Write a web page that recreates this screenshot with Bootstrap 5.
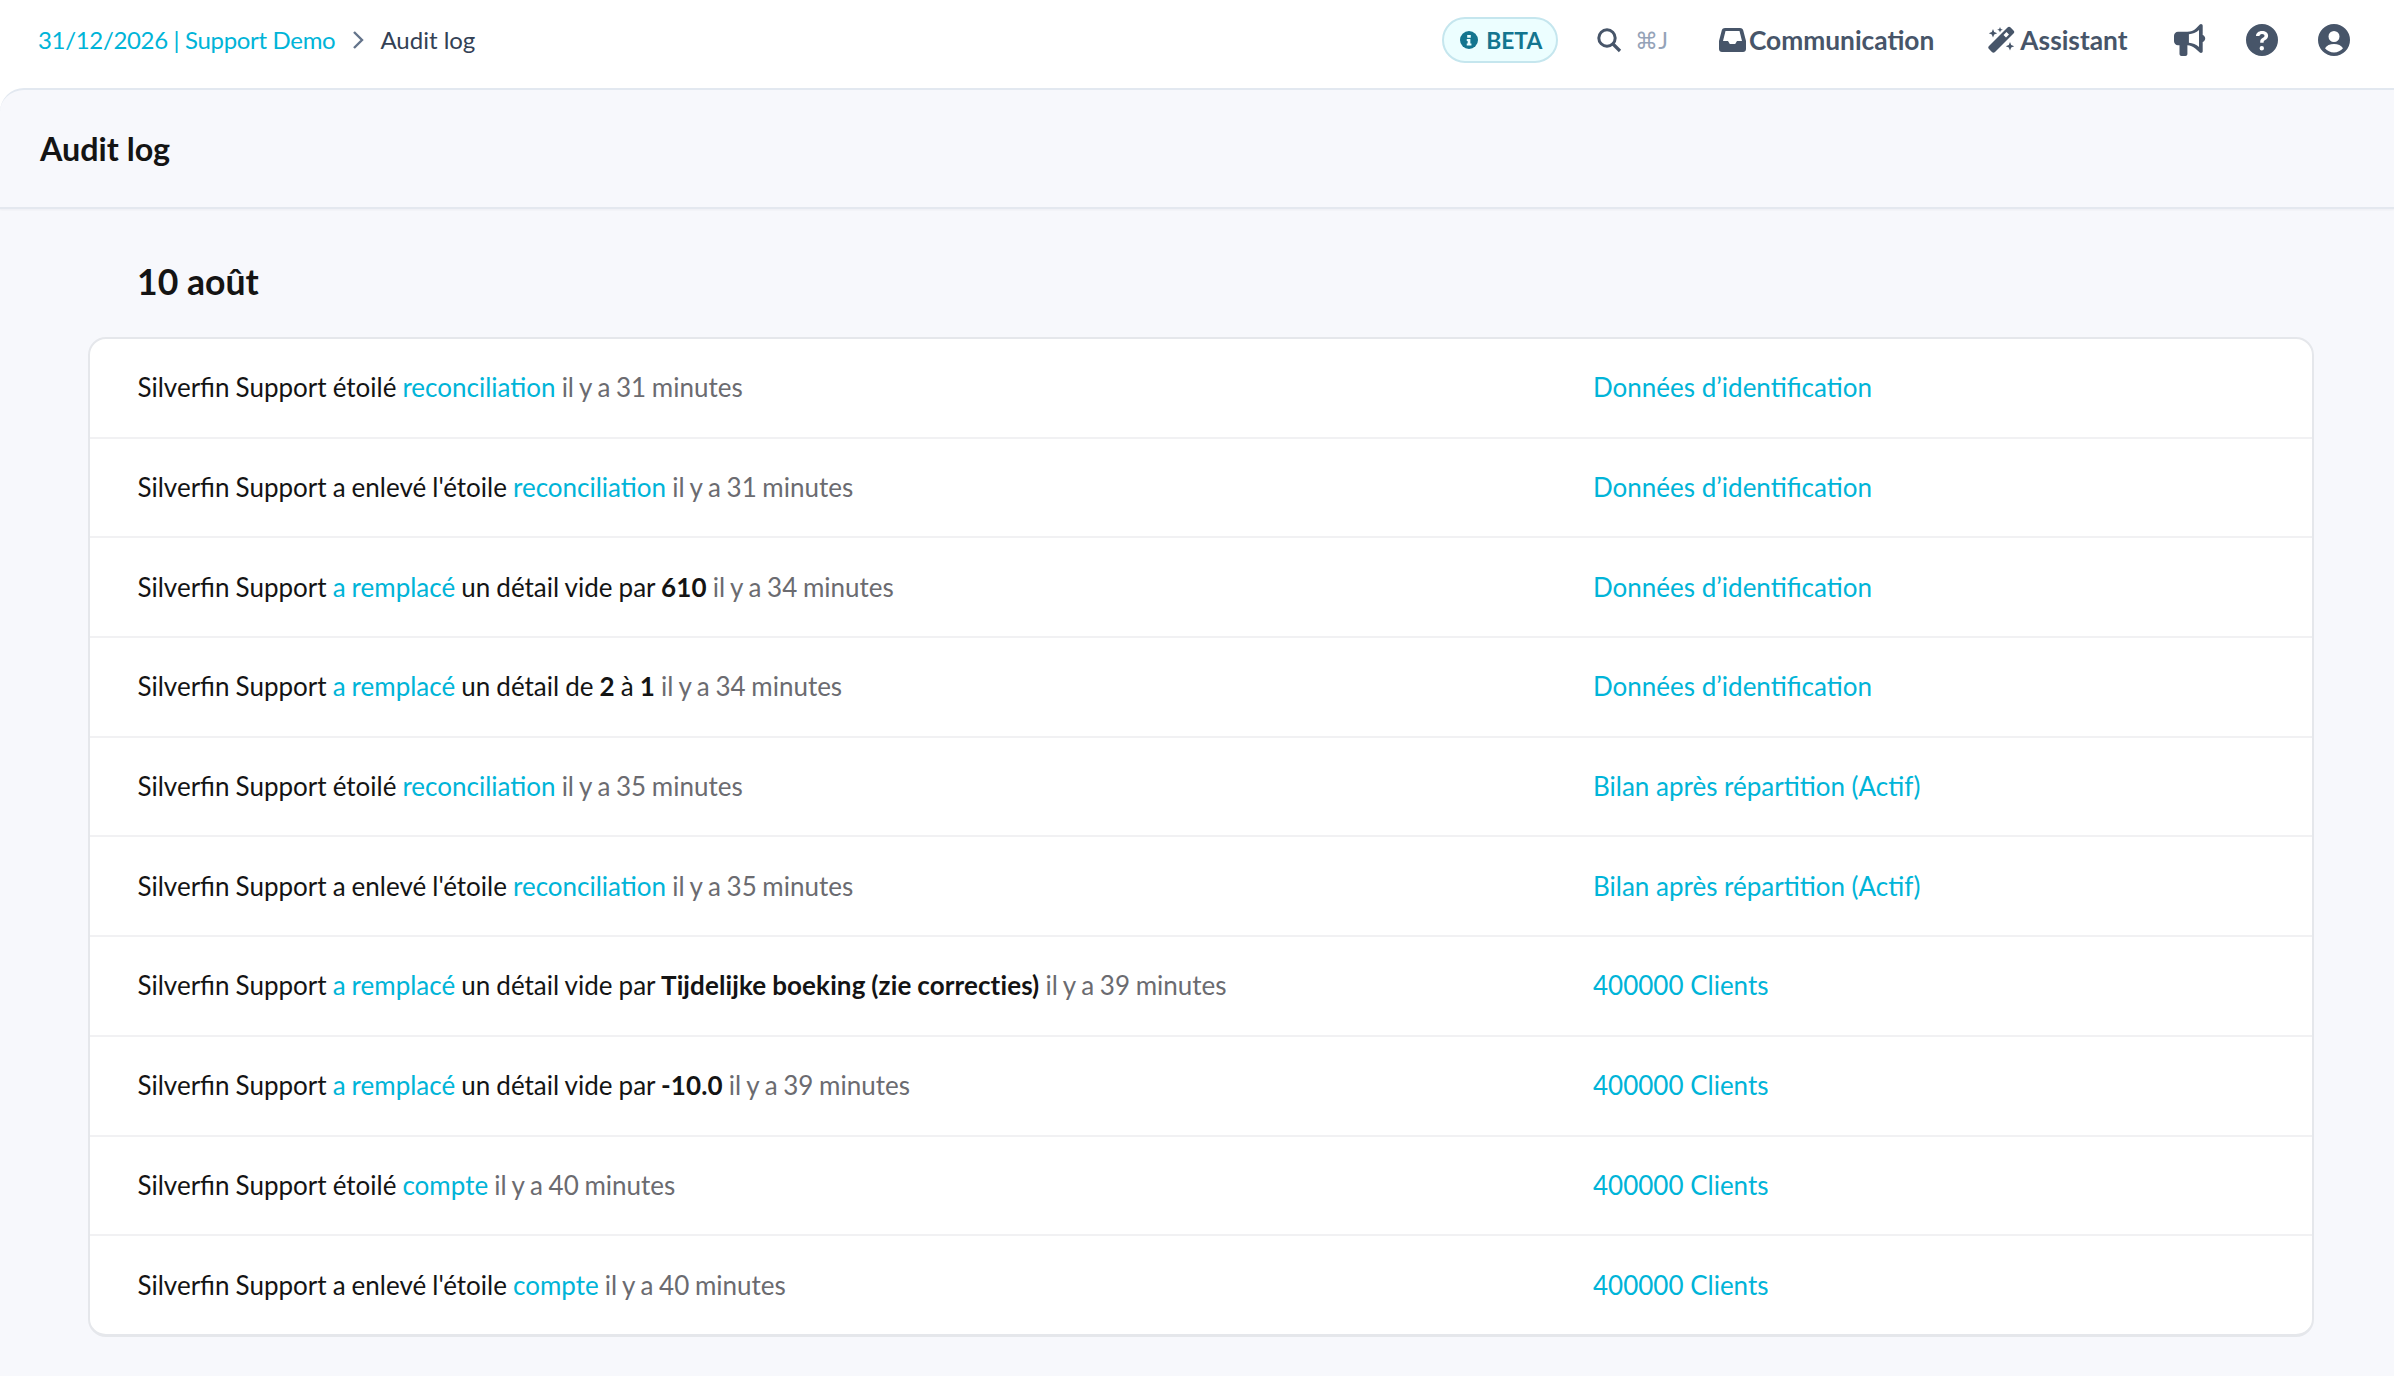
<!DOCTYPE html>
<html lang="fr">
<head>
  <meta charset="UTF-8">
  <title>Audit log</title>
  <link href="https://cdn.jsdelivr.net/npm/bootstrap@5.3.0/dist/css/bootstrap.min.css" rel="stylesheet">
  <style>
    html, body { height: 100%; }
    body { font-family: Lato, "Liberation Sans", sans-serif; background: #fff; color: #141414; font-size: 26px; overflow: hidden; }
    a { text-decoration: none; color: #00b4d8; }
    .top-strip { height: 88px; padding: 0 44px 8px 38px; }
    .crumb-text { font-size: 24px; color: #334155; }
    .crumb-link { font-size: 24px; letter-spacing: -.33px; color: #00b4d8; }
    .crumb-sep { width: 14px; height: 20px; margin: 0 15px 0 16px; }
    .beta-pill { height: 46px; padding: 0 14px 0 16px; border: 2px solid #c5e6ee; border-radius: 23px; background: #ecfeff; color: #14758f; font-weight: 700; font-size: 22.800px; gap: 8px; margin-right: 38px; }
    .search-box { color: #94a3b8; font-size: 23px; gap: 13px; margin-right: 51px; }
    .top-action { font-weight: 700; color: #475569; font-size: 26.300px; gap: 3px; }
    .top-action span { padding-top: 2px; }
    .act-comm { margin-right: 53px; }
    .act-assist { gap: 5px; margin-right: 46.500px; }
    .round-icon { width: 32px; height: 32px; margin-left: 40px; fill: #475569; display: block; }
    .main-panel { height: calc(100% - 88px); background: #f7f8fc; border-top: 2px solid #e2e8f0; border-top-left-radius: 24px; }
    .panel-head { height: 119px; padding-left: 40px; border-bottom: 2px solid #e4e8ef; box-shadow: 0 1px 2px rgba(30,41,59,.05); }
    .panel-title { font-size: 32.300px; font-weight: 700; margin: 0 0 -2px; color: #141414; }
    .panel-body { padding: 0 80px 0 88px; }
    .day-title { font-size: 35.600px; font-weight: 700; margin: 0; padding: 46px 0 0 49px; height: 128px; line-height: 54px; color: #141414; }
    .log-card { border: 2px solid #e5e7eb; border-bottom-width: 3px; border-radius: 18px; background: #fff; overflow: hidden; }
    .log-row { height: 99.700px; padding-left: 47.500px; border-bottom: 2px solid #f1f1f3; }
    .log-row:last-child { border-bottom: 0; height: 98px; }
    .log-main { width: 1455.500px; flex: none; word-spacing: -.6px; }
    .log-main b { letter-spacing: .12px; }
    .log-when { color: #6b6b70; word-spacing: -1px; }
  </style>
</head>
<body>
  <header class="top-strip d-flex align-items-center">
    <a class="crumb-link" href="#">31/12/2026 | Support Demo</a>
    <svg class="crumb-sep" viewBox="0 0 14 20"><path d="M3 2l8 8-8 8" fill="none" stroke="#64748b" stroke-width="2.400"/></svg>
    <span class="crumb-text">Audit log</span>
    <div class="ms-auto d-flex align-items-center">
      <span class="beta-pill d-flex align-items-center">
        <svg width="18" height="18" viewBox="0 0 20 20"><circle cx="10" cy="10" r="10" fill="#14758f"/><path d="M8 4.500h4v3H8zM7.500 9h4v5h1.200v2H7.500v-2h1V11h-1z" fill="#ecfeff"/></svg>
        BETA
      </span>
      <span class="search-box d-flex align-items-center">
        <svg width="26" height="26" viewBox="0 0 26 26"><circle cx="11" cy="11" r="8.200" fill="none" stroke="#475569" stroke-width="3"/><path d="M17 17l7 7" stroke="#475569" stroke-width="3.200"/></svg>
        <span>⌘J</span>
      </span>
      <a class="top-action act-comm d-flex align-items-center" href="#">
        <svg width="27" height="24" viewBox="0 0 27 24"><path fill-rule="evenodd" d="M6 0h15c1.500 0 2.700.8 3.200 2.200L27 13v8c0 1.700-1.300 3-3 3H3c-1.700 0-3-1.300-3-3v-8L2.800 2.200C3.300.8 4.500 0 6 0zm.5 3L4 13h5l1.800 3h5.400l1.800-3h5l-2.500-10z" fill="#475569"/></svg>
        <span>Communication</span>
      </a>
      <a class="top-action act-assist d-flex align-items-center" href="#">
        <svg width="28" height="28" viewBox="0 0 28 28" fill="#475569"><path d="M20.500 1.500a2.200 2.200 0 0 1 3.100 0l2.900 2.900a2.200 2.200 0 0 1 0 3.100L8 26a2.200 2.200 0 0 1-3.100 0L2 23.100A2.200 2.200 0 0 1 2 20zM19.500 6l-3 3 2.500 2.500 3-3z" fill-rule="evenodd"/><path d="M6 3l1.200 3 3 1.200-3 1.200L6 11.400 4.800 8.400l-3-1.200 3-1.200zM13 1l.8 2 2 .8-2 .8-.8 2-.8-2-2-.8 2-.8zM23 16l1.200 3 3 1.200-3 1.200-1.200 3-1.200-3-3-1.200 3-1.200z"/></svg>
        <span>Assistant</span>
      </a>
      <svg class="round-icon" style="margin-left:0" viewBox="0 0 32 32"><path d="M27 0c1 0 1.700.8 1.700 1.700V11c1.600.6 2.500 2 2.500 3.500S30.300 17.400 28.700 18v9.300c0 .9-.7 1.700-1.700 1.700-.5 0-.9-.2-1.200-.5l-4.500-4c-2.200-2-5-3.100-7.900-3.300V30c0 1.100-.9 2-2 2H7.500c-1.100 0-2-.9-2-2v-8.800H4c-2.200 0-4-1.800-4-4v-5.500c0-2.200 1.800-4 4-4h9.300c3.200 0 6.300-1.200 8.600-3.300l3.900-3.900C26.100.200 26.500 0 27 0zm-2 6c-2.800 2.500-6.400 4-10.100 4.200v8.500c3.800.2 7.300 1.700 10.100 4.200z" fill-rule="evenodd"/></svg>
      <svg class="round-icon" viewBox="0 0 32 32"><path fill-rule="evenodd" d="M16 0a16 16 0 1 1 0 32 16 16 0 0 1 0-32zm0 7c-3.600 0-6 2.200-6 5h3.500c0-1 1-2 2.500-2s2.500.8 2.500 1.800c0 1-.7 1.500-2 2.300-1.500.9-2.300 2-2.300 4v.7h3.400v-.6c0-1 .4-1.500 1.700-2.300 1.700-1 2.800-2.200 2.800-4.200C22.100 9 19.600 7 16 7zm-.2 15a2.200 2.200 0 1 0 0 4.400 2.200 2.200 0 0 0 0-4.400z"/></svg>
      <svg class="round-icon" viewBox="0 0 32 32"><path fill-rule="evenodd" d="M16 0a16 16 0 1 1 0 32 16 16 0 0 1 0-32zm0 7a5.500 5.500 0 1 0 0 11 5.500 5.500 0 0 0 0-11zm0 13c-4 0-7.500 1.600-9 4.200C9.200 26.700 12.400 28.500 16 28.500s6.800-1.800 9-4.300c-1.500-2.600-5-4.200-9-4.200z"/></svg>
    </div>
  </header>

  <main class="main-panel">
    <div class="panel-head d-flex align-items-center">
      <h1 class="panel-title">Audit log</h1>
    </div>
    <div class="panel-body">
      <h2 class="day-title">10 août</h2>
      <div class="log-card" id="logCard"></div>
    </div>
  </main>

  <script>
    const rows = [
      ['Silverfin Support étoilé <a href="#">reconciliation</a>', '31', 'Données d’identification'],
      ['Silverfin Support a enlevé l\'étoile <a href="#">reconciliation</a>', '31', 'Données d’identification'],
      ['Silverfin Support <a href="#">a remplacé</a> un détail vide par <b>610</b>', '34', 'Données d’identification'],
      ['Silverfin Support <a href="#">a remplacé</a> un détail de <b>2</b> à <b>1</b>', '34', 'Données d’identification'],
      ['Silverfin Support étoilé <a href="#">reconciliation</a>', '35', 'Bilan après répartition (Actif)'],
      ['Silverfin Support a enlevé l\'étoile <a href="#">reconciliation</a>', '35', 'Bilan après répartition (Actif)'],
      ['Silverfin Support <a href="#">a remplacé</a> un détail vide par <b>Tijdelijke boeking (zie correcties)</b>', '39', '400000 Clients'],
      ['Silverfin Support <a href="#">a remplacé</a> un détail vide par <b>-10.0</b>', '39', '400000 Clients'],
      ['Silverfin Support étoilé <a href="#">compte</a>', '40', '400000 Clients'],
      ['Silverfin Support a enlevé l\'étoile <a href="#">compte</a>', '40', '400000 Clients']
    ];
    document.getElementById('logCard').innerHTML = rows.map(r => `
      <div class="log-row d-flex align-items-center">
        <div class="log-main">${r[0]} <span class="log-when">il y a ${r[1]} minutes</span></div>
        <a href="#">${r[2]}</a>
      </div>`).join('');
  </script>
  <script src="https://cdn.jsdelivr.net/npm/bootstrap@5.3.0/dist/js/bootstrap.bundle.min.js"></script>
</body>
</html>
